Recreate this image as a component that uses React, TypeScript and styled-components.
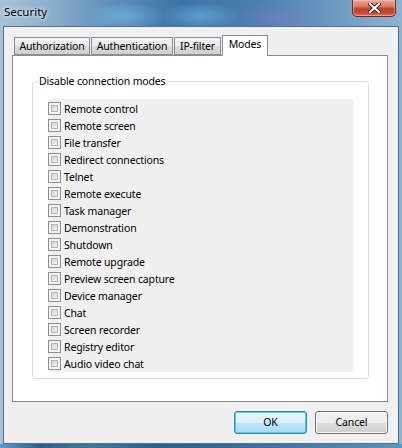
import React from 'react';
import styled, { createGlobalStyle } from 'styled-components';

const FONT = `'Noto Sans', 'Open Sans', sans-serif`;

const GlobalStyle = createGlobalStyle`
  html, body {
    margin: 0;
    padding: 0;
    overflow: hidden;
  }
  body {
    font-family: ${FONT};
    font-size: 10.5px;
    letter-spacing: -0.15px;
    color: #000;
  }
`;

const Window = styled.div`
  width: 402px;
  height: 448px;
  display: flex;
  flex-direction: column;
  background:
    radial-gradient(ellipse 40px 14px at 125px 16px, rgba(120, 200, 240, 0.55), transparent),
    radial-gradient(ellipse 40px 14px at 200px 16px, rgba(120, 200, 240, 0.5), transparent),
    radial-gradient(ellipse 50px 14px at 275px 18px, rgba(150, 120, 200, 0.35), transparent),
    linear-gradient(90deg, #a7c1d8 0px, #93b3cf 40px, #5f90bb 110px, #3c74a6 180px, #4a80b0 260px, #6f9cc3 340px, #8db3d4 402px);
`;

const TitleBar = styled.div`
  height: 26px;
  display: flex;
  align-items: flex-start;
  justify-content: space-between;
  padding-left: 4px;
`;

const Title = styled.span`
  font-size: 11.5px;
  letter-spacing: 0;
  line-height: 16px;
  margin-top: 4px;
  text-shadow: 0 0 6px rgba(255, 255, 255, 0.9), 0 0 3px rgba(255, 255, 255, 0.7);
`;

const CloseButton = styled.div`
  width: 44px;
  height: 17px;
  margin-right: 6px;
  box-sizing: border-box;
  border: 1px solid #6b2a22;
  border-top: none;
  border-radius: 0 0 5px 5px;
  background: linear-gradient(180deg, #e9a99a 0%, #d77a66 40%, #c23f24 55%, #c8472c 80%, #e07a5c 100%);
  box-shadow: inset 0 0 0 1px rgba(255, 200, 190, 0.5);
  display: flex;
  align-items: center;
  justify-content: center;
`;

const Client = styled.div`
  flex: 1;
  margin: 0 3px;
  border: 1px solid #5b6f84;
  background: #f0f0f0;
  display: flex;
  flex-direction: column;
  padding: 8px 10px 9px 8px;
`;

const BottomFrame = styled.div`
  height: 4px;
  background: linear-gradient(90deg, #5d9ccd 0px, #2f5d8a 40px, #3f7a9a 90px, #2b5f8f 160px, #3d6f9f 260px, #5d94c0 402px);
`;

const TabStrip = styled.div`
  display: flex;
  align-items: flex-end;
  height: 20px;
  padding-left: 2px;
`;

const Tab = styled.div<{ $active?: boolean; $w: number }>`
  box-sizing: border-box;
  width: ${(p) => p.$w}px;
  height: ${(p) => (p.$active ? 21 : 18)}px;
  margin-right: 1px;
  margin-bottom: ${(p) => (p.$active ? -1 : 0)}px;
  border: 1px solid #898c95;
  border-bottom: ${(p) => (p.$active ? 'none' : '1px solid #898c95')};
  background: ${(p) => (p.$active ? '#ffffff' : 'linear-gradient(180deg, #f2f2f2 0%, #ebebeb 50%, #dddddd 51%, #cfcfcf 100%)')};
  line-height: ${(p) => (p.$active ? 17 : 16)}px;
  text-align: center;
  position: relative;
  z-index: ${(p) => (p.$active ? 2 : 1)};
  white-space: nowrap;
`;

const Panel = styled.div`
  height: 347px;
  box-sizing: border-box;
  border: 1px solid #898c95;
  background: #fff;
  padding: 18px 18px 0 19px;
`;

const Group = styled.fieldset`
  margin: 0;
  width: 337px;
  box-sizing: border-box;
  border: 1px solid #d5dfe5;
  border-radius: 3px;
  padding: 0 15px 6px 15px;
`;

const Legend = styled.legend`
  line-height: 15px;
  padding: 0 1px;
  margin-left: -10px;
`;

const List = styled.div`
  margin-top: 10px;
  background: #f0f0f0;
  padding-top: 1px;
  height: 273px;
  box-sizing: border-box;
`;

const Row = styled.label`
  display: flex;
  align-items: center;
  height: 17px;
  white-space: nowrap;
`;

const Box = styled.span`
  width: 13px;
  height: 13px;
  box-sizing: border-box;
  border: 1px solid #8e8f8f;
  background: #f4f4f4;
  margin-right: 3px;
  flex: none;
  display: flex;
  padding: 2px;

  &::after {
    content: '';
    flex: 1;
    border: 1px solid #b1b4b8;
    background: linear-gradient(135deg, #d2d4d6 0%, #e6e7e8 60%, #f6f6f6 100%);
  }
`;

const ButtonRow = styled.div`
  margin-top: 9px;
  display: flex;
  justify-content: flex-end;
  gap: 8px;
`;

const Button = styled.div<{ $default?: boolean }>`
  width: 73px;
  height: 23px;
  box-sizing: border-box;
  border: 1px solid ${(p) => (p.$default ? '#3c7fb1' : '#707070')};
  border-radius: 3px;
  background: ${(p) =>
    p.$default
      ? 'linear-gradient(180deg, #eaf6fd 0%, #d9f0fc 50%, #bee6fd 51%, #a7d9f5 100%)'
      : 'linear-gradient(180deg, #f2f2f2 0%, #ebebeb 50%, #dddddd 51%, #cfcfcf 100%)'};
  box-shadow: inset 0 0 0 1px ${(p) => (p.$default ? '#48d1f2' : 'rgba(255,255,255,0.8)')};
  line-height: 21px;
  text-align: center;
`;

const tabs = [
  { label: 'Authorization', w: 76 },
  { label: 'Authentication', w: 82 },
  { label: 'IP-filter', w: 47 },
  { label: 'Modes', w: 46, active: true },
];

const modes = [
  'Remote control',
  'Remote screen',
  'File transfer',
  'Redirect connections',
  'Telnet',
  'Remote execute',
  'Task manager',
  'Demonstration',
  'Shutdown',
  'Remote upgrade',
  'Preview screen capture',
  'Device manager',
  'Chat',
  'Screen recorder',
  'Registry editor',
  'Audio video chat',
];

function CloseGlyph() {
  return (
    <svg width="13" height="10" viewBox="0 0 13 10">
      <path d="M2 1 L11 9 M11 1 L2 9" stroke="#4a1a14" strokeWidth="4" strokeLinecap="square" fill="none" />
      <path d="M2 1 L11 9 M11 1 L2 9" stroke="#ffffff" strokeWidth="2.2" strokeLinecap="square" fill="none" />
    </svg>
  );
}

export default function App() {
  return (
    <>
      <GlobalStyle />
      <Window>
        <TitleBar>
          <Title>Security</Title>
          <CloseButton>
            <CloseGlyph />
          </CloseButton>
        </TitleBar>
        <Client>
          <TabStrip>
            {tabs.map((t) => (
              <Tab key={t.label} $w={t.w} $active={t.active}>
                {t.label}
              </Tab>
            ))}
          </TabStrip>
          <Panel>
            <Group>
              <Legend>Disable connection modes</Legend>
              <List>
                {modes.map((m) => (
                  <Row key={m}>
                    <Box />
                    {m}
                  </Row>
                ))}
              </List>
            </Group>
          </Panel>
          <ButtonRow>
            <Button $default>OK</Button>
            <Button>Cancel</Button>
          </ButtonRow>
        </Client>
        <BottomFrame />
      </Window>
    </>
  );
}
